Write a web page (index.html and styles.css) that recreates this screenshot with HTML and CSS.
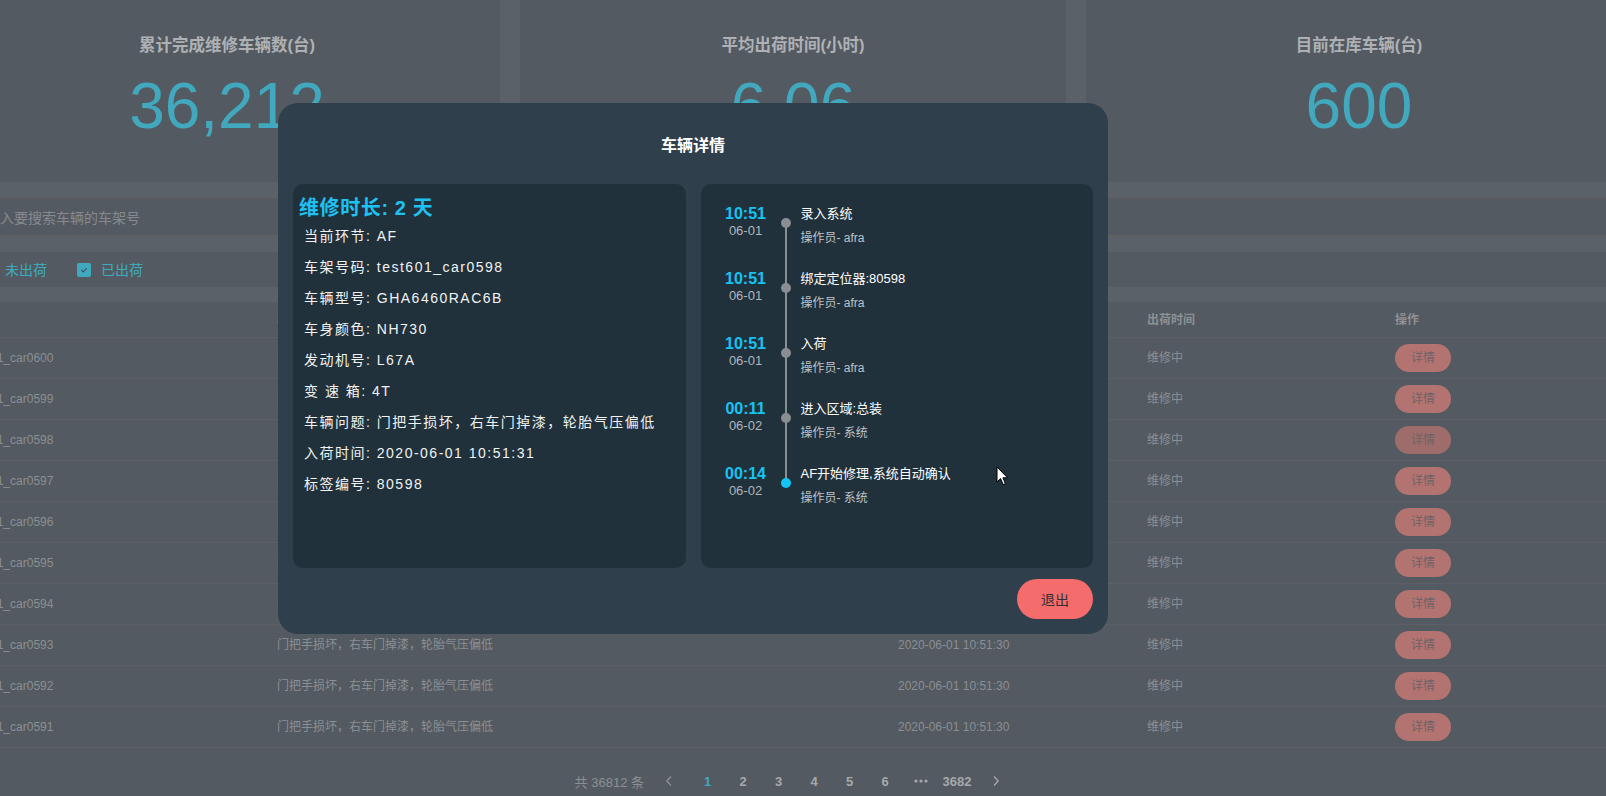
FILE: index.html
```html
<!DOCTYPE html>
<html lang="zh-CN">
<head>
<meta charset="utf-8">
<title>车辆详情</title>
<link rel="stylesheet" href="styles.css">
</head>
<body>
<div class="page">
  <section class="stats">
    <div class="stat"><div class="stat-title">累计完成维修车辆数(台)</div><div class="stat-value">36,212</div></div>
    <div class="stat"><div class="stat-title">平均出荷时间(小时)</div><div class="stat-value">6.06</div></div>
    <div class="stat"><div class="stat-title">目前在库车辆(台)</div><div class="stat-value">600</div></div>
  </section>

  <div class="search">请输入要搜索车辆的车架号</div>

  <div class="filters">
    <label class="check"><span class="box"><svg width="10" height="10" viewBox="0 0 10 10"><polyline points="2.5,5 4.3,6.8 7.6,3.2" fill="none" stroke="#4a5259" stroke-width="1.2"/></svg></span>未出荷</label>
    <label class="check"><span class="box"><svg width="10" height="10" viewBox="0 0 10 10"><polyline points="2.5,5 4.3,6.8 7.6,3.2" fill="none" stroke="#4a5259" stroke-width="1.2"/></svg></span>已出荷</label>
  </div>

  <section class="table">
    <div class="row head"><div>车架号</div><div>车辆问题</div><div>入荷时间</div><div>出荷时间</div><div>操作</div></div>
    <div class="row"><div>test601_car0600</div><div>门把手损坏，右车门掉漆，轮胎气压偏低</div><div>2020-06-01 10:51:30</div><div>维修中</div><div><span class="btn-detail">详情</span></div></div>
    <div class="row"><div>test601_car0599</div><div>门把手损坏，右车门掉漆，轮胎气压偏低</div><div>2020-06-01 10:51:30</div><div>维修中</div><div><span class="btn-detail">详情</span></div></div>
    <div class="row"><div>test601_car0598</div><div>门把手损坏，右车门掉漆，轮胎气压偏低</div><div>2020-06-01 10:51:31</div><div>维修中</div><div><span class="btn-detail active">详情</span></div></div>
    <div class="row"><div>test601_car0597</div><div>门把手损坏，右车门掉漆，轮胎气压偏低</div><div>2020-06-01 10:51:30</div><div>维修中</div><div><span class="btn-detail">详情</span></div></div>
    <div class="row"><div>test601_car0596</div><div>门把手损坏，右车门掉漆，轮胎气压偏低</div><div>2020-06-01 10:51:30</div><div>维修中</div><div><span class="btn-detail">详情</span></div></div>
    <div class="row"><div>test601_car0595</div><div>门把手损坏，右车门掉漆，轮胎气压偏低</div><div>2020-06-01 10:51:30</div><div>维修中</div><div><span class="btn-detail">详情</span></div></div>
    <div class="row"><div>test601_car0594</div><div>门把手损坏，右车门掉漆，轮胎气压偏低</div><div>2020-06-01 10:51:30</div><div>维修中</div><div><span class="btn-detail">详情</span></div></div>
    <div class="row"><div>test601_car0593</div><div>门把手损坏，右车门掉漆，轮胎气压偏低</div><div>2020-06-01 10:51:30</div><div>维修中</div><div><span class="btn-detail">详情</span></div></div>
    <div class="row"><div>test601_car0592</div><div>门把手损坏，右车门掉漆，轮胎气压偏低</div><div>2020-06-01 10:51:30</div><div>维修中</div><div><span class="btn-detail">详情</span></div></div>
    <div class="row"><div>test601_car0591</div><div>门把手损坏，右车门掉漆，轮胎气压偏低</div><div>2020-06-01 10:51:30</div><div>维修中</div><div><span class="btn-detail">详情</span></div></div>

    <nav class="pager">
      <span class="total">共 36812 条</span>
      <span class="arrow"><svg width="8" height="12" viewBox="0 0 8 12"><polyline points="6,1.5 1.8,6 6,10.5" fill="none" stroke="#8e9296" stroke-width="1.3"/></svg></span>
      <ul class="pages">
        <li class="on">1</li><li>2</li><li>3</li><li>4</li><li>5</li><li>6</li>
        <li><svg width="14" height="4" viewBox="0 0 14 4"><circle cx="2" cy="2" r="1.6" fill="#a6a9ac"/><circle cx="7" cy="2" r="1.6" fill="#a6a9ac"/><circle cx="12" cy="2" r="1.6" fill="#a6a9ac"/></svg></li>
        <li class="wide">3682</li>
      </ul>
      <span class="arrow"><svg width="8" height="12" viewBox="0 0 8 12"><polyline points="2,1.5 6.2,6 2,10.5" fill="none" stroke="#a6a9ac" stroke-width="1.3"/></svg></span>
    </nav>
  </section>
</div>

<div class="modal">
  <div class="modal-head">车辆详情</div>
  <div class="modal-body">
    <div class="panel info">
      <h2>维修时长: 2 天</h2>
      <ul>
        <li>当前环节: AF</li>
        <li>车架号码: test601_car0598</li>
        <li>车辆型号: GHA6460RAC6B</li>
        <li>车身颜色: NH730</li>
        <li>发动机号: L67A</li>
        <li>变 速 箱: 4T</li>
        <li>车辆问题: 门把手损坏，右车门掉漆，轮胎气压偏低</li>
        <li>入荷时间: 2020-06-01 10:51:31</li>
        <li>标签编号: 80598</li>
      </ul>
    </div>
    <div class="panel timeline">
      <div class="tl-item">
        <div class="tl-time"><div class="tl-clock">10:51</div><div class="tl-date">06-01</div></div>
        <div class="tl-axis line"><span class="tl-dot"></span></div>
        <div class="tl-content"><div class="tl-title">录入系统</div><div class="tl-op">操作员- afra</div></div>
      </div>
      <div class="tl-item">
        <div class="tl-time"><div class="tl-clock">10:51</div><div class="tl-date">06-01</div></div>
        <div class="tl-axis line"><span class="tl-dot"></span></div>
        <div class="tl-content"><div class="tl-title">绑定定位器:80598</div><div class="tl-op">操作员- afra</div></div>
      </div>
      <div class="tl-item">
        <div class="tl-time"><div class="tl-clock">10:51</div><div class="tl-date">06-01</div></div>
        <div class="tl-axis line"><span class="tl-dot"></span></div>
        <div class="tl-content"><div class="tl-title">入荷</div><div class="tl-op">操作员- afra</div></div>
      </div>
      <div class="tl-item">
        <div class="tl-time"><div class="tl-clock">00:11</div><div class="tl-date">06-02</div></div>
        <div class="tl-axis line"><span class="tl-dot"></span></div>
        <div class="tl-content"><div class="tl-title">进入区域:总装</div><div class="tl-op">操作员- 系统</div></div>
      </div>
      <div class="tl-item">
        <div class="tl-time"><div class="tl-clock">00:14</div><div class="tl-date">06-02</div></div>
        <div class="tl-axis"><span class="tl-dot current"></span></div>
        <div class="tl-content"><div class="tl-title">AF开始修理,系统自动确认</div><div class="tl-op">操作员- 系统</div></div>
      </div>
    </div>
  </div>
  <div class="modal-foot"><button class="btn-exit">退出</button></div>
</div>

<svg class="cursor" width="13" height="21" viewBox="0 0 13 21"><path d="M1 1 L1 16 L4.6 12.6 L7.2 18.6 L9.4 17.6 L6.9 11.8 L11.6 11.8 Z" fill="#fff" stroke="#000" stroke-width="1" stroke-linejoin="round"/></svg>
</body>
</html>
```

FILE: styles.css
```css
* { box-sizing: border-box; }
html, body { margin: 0; padding: 0; overflow: hidden; }
body {
  width: 1606px;
  height: 796px;
  background: #5a6168;
  font-family: "Liberation Sans", "Noto Sans CJK SC", sans-serif;
  position: relative;
}

.page { margin-left: -46px; width: 1678px; }

.stats {
  display: grid;
  grid-template-columns: repeat(3, 546px);
  column-gap: 20px;
}
.stat {
  height: 182px;
  background: #535a61;
  text-align: center;
  padding-top: 36px;
}
.stat-title {
  font-size: 16.5px;
  font-weight: bold;
  line-height: 18px;
  color: #aeb1b4;
}
.stat-value {
  margin-top: 20px;
  font-size: 64px;
  line-height: 64px;
  color: #41a8be;
}

.search {
  margin-top: 15px;
  height: 39px;
  background: #535a61;
  border-top: 1px solid #625f5c;
  border-bottom: 1px solid #625f5c;
  display: flex;
  align-items: center;
  padding-left: 18px;
  font-size: 14px;
  color: #868a8e;
}

.filters {
  margin-top: 16px;
  height: 35px;
  background: #535a61;
  display: flex;
  align-items: center;
  padding-left: 27px;
}
.check {
  display: flex;
  align-items: center;
  margin-right: 30px;
  color: #3fa9c0;
  font-size: 14px;
  line-height: 16px;
}
.box {
  width: 14px;
  height: 14px;
  border-radius: 2px;
  background: #3fa9c0;
  margin-right: 10px;
  display: flex;
  align-items: center;
  justify-content: center;
}

.table {
  margin-top: 15px;
  background: #535a61;
  padding-bottom: 40px;
}
.row {
  display: grid;
  grid-template-columns: 313px 621px 249px 248px 1fr;
  height: 41px;
  border-bottom: 1px solid #5b6065;
  align-items: center;
  font-size: 12px;
  line-height: 16px;
  color: #8b8f93;
}
.row.head {
  height: 36px;
  font-weight: bold;
  color: #8e9194;
}
.row > div { padding-left: 10px; white-space: nowrap; }

.btn-detail {
  display: inline-flex;
  align-items: center;
  justify-content: center;
  width: 56px;
  height: 28px;
  border-radius: 14px;
  background: #b27371;
  color: #6e6466;
}
.btn-detail.active { background: #9e6c6b; }

.pager {
  display: flex;
  justify-content: center;
  align-items: center;
  height: 28px;
  margin-top: 19px;
  font-size: 13px;
  color: #8c9094;
}
.total { margin-right: 10px; }
.arrow {
  width: 30px;
  height: 28px;
  display: flex;
  align-items: center;
  justify-content: center;
}
.pages {
  display: flex;
  list-style: none;
  margin: 0 6px;
  padding: 0;
}
.pages li {
  min-width: 35.5px;
  height: 28px;
  padding: 0 4px;
  display: flex;
  align-items: center;
  justify-content: center;
  font-weight: bold;
  color: #a6a9ac;
}
.pages li.on { color: #3fa9c0; }

/* modal */
.modal {
  position: absolute;
  left: 278px;
  top: 103px;
  width: 830px;
  background: #2f404c;
  border-radius: 20px;
  padding: 0 15px 15px;
}
.modal-head {
  height: 81px;
  display: flex;
  align-items: center;
  justify-content: center;
  font-size: 16px;
  font-weight: bold;
  color: #fff;
}
.modal-body {
  display: grid;
  grid-template-columns: 1fr 1fr;
  gap: 15px;
}
.panel {
  height: 384px;
  background: #20313c;
  border-radius: 10px;
}
.info { padding: 11px 0 0 6px; }
.info h2 {
  margin: 0;
  font-size: 20px;
  line-height: 26px;
  letter-spacing: 0.6px;
  color: #1ec2f2;
  font-weight: bold;
}
.info ul { list-style: none; margin: 0; padding: 0 0 0 5px; }
.info li {
  line-height: 31px;
  font-size: 14px;
  letter-spacing: 1.5px;
  color: #f2f2f2;
}

.timeline { padding: 21px 0 0 15px; }
.tl-item { display: flex; height: 65px; }
.tl-time { width: 60px; text-align: center; }
.tl-clock {
  font-size: 16px;
  font-weight: bold;
  line-height: 18px;
  color: #16c3f3;
}
.tl-date {
  font-size: 13px;
  line-height: 16px;
  color: #b1b5b9;
}
.tl-axis { width: 20px; position: relative; }
.tl-axis.line::before {
  content: "";
  position: absolute;
  left: 9px;
  top: 18px;
  width: 2px;
  height: 65px;
  background: #8a8e93;
}
.tl-dot {
  position: absolute;
  left: 5px;
  top: 13px;
  width: 10px;
  height: 10px;
  border-radius: 50%;
  background: #8a8e93;
}
.tl-dot.current { background: #12c6f7; }
.tl-content { margin-left: 5px; }
.tl-title {
  font-size: 13px;
  line-height: 18px;
  color: #fff;
}
.tl-op {
  margin-top: 7px;
  font-size: 12px;
  line-height: 16px;
  color: #bfc3c7;
}

.modal-foot {
  display: flex;
  justify-content: flex-end;
  margin-top: 11px;
}
.btn-exit {
  width: 76px;
  height: 40px;
  border-radius: 20px;
  border: 0;
  background: #f56c6c;
  color: #303133;
  font-size: 14px;
  font-family: inherit;
}

.cursor {
  position: absolute;
  left: 996px;
  top: 466px;
}
```
